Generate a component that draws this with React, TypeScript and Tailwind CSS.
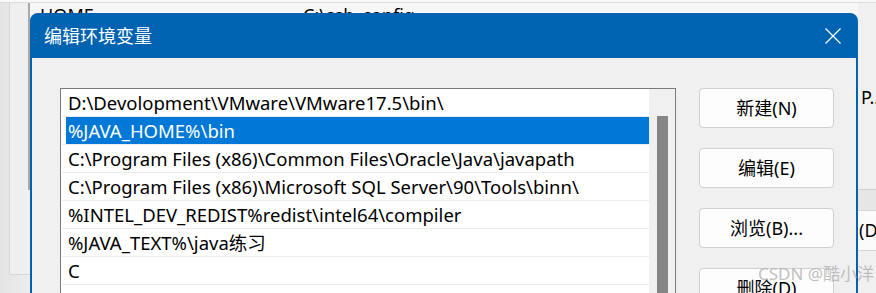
const paths = [
  "D:\\Devolopment\\VMware\\VMware17.5\\bin\\",
  "%JAVA_HOME%\\bin",
  "C:\\Program Files (x86)\\Common Files\\Oracle\\Java\\javapath",
  "C:\\Program Files (x86)\\Microsoft SQL Server\\90\\Tools\\binn\\",
  "%INTEL_DEV_REDIST%redist\\intel64\\compiler",
  "%JAVA_TEXT%\\java练习",
  "C",
  "",
];

const buttons = ["新建(N)", "编辑(E)", "浏览(B)...", "删除(D)"];

const font = "font-['Noto_Sans','Noto_Sans_CJK_SC',sans-serif]";

export default function App() {
  return (
    <div className={`relative w-[876px] h-[293px] overflow-hidden bg-[#f0f0f0] ${font}`}>
      {/* background window */}
      <div className="h-[3px] bg-[#f9f9f9] border-b border-[#dcdcdc]" />
      <div className="flex h-[290px]">
        <div className="w-[30px] bg-gradient-to-r from-[#e4e4e4] to-[#ececec] pl-[9px]">
          <div className="h-[272px] border-l border-b border-[#d6d6d6] bg-[#efefef] flex justify-end">
            <div className="w-[2px] h-[187px] bg-[#a8a8a8]" />
          </div>
        </div>
        <div className="flex-1 bg-[#f7f7f7]">
          <div className="flex text-[18px] leading-[24px] text-black">
            <span className="ml-[10px] w-[263px]">HOME</span>
            <span>C:\ssh_config</span>
          </div>
        </div>
      </div>

      {/* right edge of background window */}
      <div className="absolute left-[858px] top-[3px] w-[18px] h-[290px] overflow-hidden bg-[#f0f0f0] flex flex-col text-[18px] text-black">
        <div className="mt-[82px] h-[24px] leading-[24px] pl-[3px] whitespace-nowrap">P...</div>
        <div className="mt-[80px] h-[21px] shrink-0 border-t border-[#cfcfcf] bg-[#e6e6e6]" />
        <div className="h-[41px] shrink-0 border-y border-[#d6d6d6] bg-[#fbfbfb] leading-[38px] pl-[1px] whitespace-nowrap">(D</div>
      </div>

      {/* dialog */}
      <div className="absolute left-[30px] top-[13px] w-[828px] h-[300px] rounded-t-[8px] bg-[#0063b1] flex flex-col">
        <div className="h-[45px] flex items-center justify-between pl-[14px] pr-[17px] text-white">
          <span className="text-[18px] leading-[24px]">编辑环境变量</span>
          <svg width="16" height="16" viewBox="0 0 16 16" fill="none" stroke="white" strokeWidth="1.2">
            <path d="M0.5 0.5 L15.5 15.5 M15.5 0.5 L0.5 15.5" />
          </svg>
        </div>
        <div className="flex-1 mx-[2px] bg-[#f0f0f0] flex pt-[30px] pl-[28px]">
          <div className="w-[616px] h-[220px] border border-[#7a7a7a] bg-white flex">
            <div className="flex-1 pl-[1px] flex flex-col">
              {paths.map((p, i) => (
                <div key={i} className="h-[28px] shrink-0 border-b border-[#ececec] flex">
                  <div
                    className={`ml-[4px] flex-1 pl-[2px] text-[18.5px] leading-[28px] whitespace-nowrap ${
                      i === 1 ? "bg-[#0078d7] text-white" : "text-black"
                    }`}
                  >
                    {p}
                  </div>
                </div>
              ))}
            </div>
            <div className="w-[26px] bg-[#f0f0f0] flex justify-center pt-[27px]">
              <div className="w-[11px] h-full bg-[#858585]" />
            </div>
          </div>
          <div className="ml-[23px] flex flex-col gap-[20px]">
            {buttons.map((b) => (
              <div
                key={b}
                className="w-[135px] h-[40px] shrink-0 rounded-[4px] border border-[#d0d0d0] bg-[#fdfdfd] flex items-center justify-center text-[18px] text-black"
              >
                {b}
              </div>
            ))}
          </div>
        </div>
      </div>

      {/* watermark */}
      <div className="absolute left-[758px] top-[263px] text-[17px] leading-[22px] text-[#b0b0b0]/80 whitespace-nowrap">
        CSDN @酷小洋
      </div>
    </div>
  );
}
